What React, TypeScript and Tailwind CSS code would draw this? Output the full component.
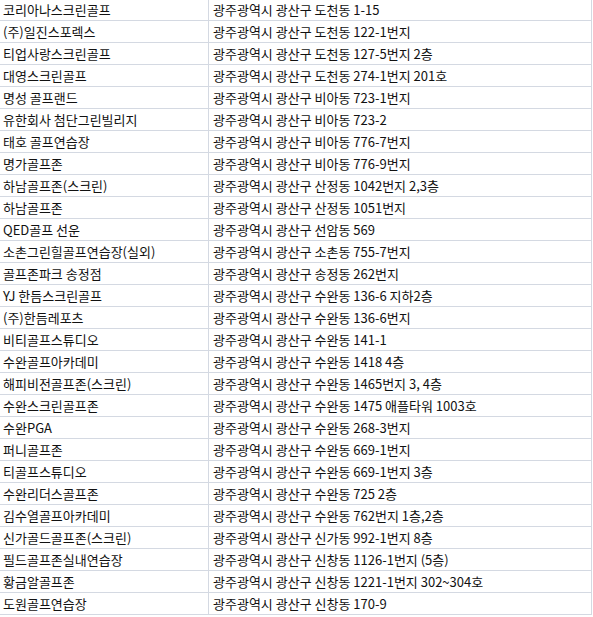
const rows: [string, string][] = [
  ["코리아나스크린골프", "광주광역시 광산구 도천동 1-15"],
  ["(주)일진스포렉스", "광주광역시 광산구 도천동 122-1번지"],
  ["티업사랑스크린골프", "광주광역시 광산구 도천동 127-5번지 2층"],
  ["대영스크린골프", "광주광역시 광산구 도천동 274-1번지 201호"],
  ["명성 골프랜드", "광주광역시 광산구 비아동 723-1번지"],
  ["유한회사 첨단그린빌리지", "광주광역시 광산구 비아동 723-2"],
  ["태호 골프연습장", "광주광역시 광산구 비아동 776-7번지"],
  ["명가골프존", "광주광역시 광산구 비아동 776-9번지"],
  ["하남골프존(스크린)", "광주광역시 광산구 산정동 1042번지 2,3층"],
  ["하남골프존", "광주광역시 광산구 산정동 1051번지"],
  ["QED골프 선운", "광주광역시 광산구 선암동 569"],
  ["소촌그린힐골프연습장(실외)", "광주광역시 광산구 소촌동 755-7번지"],
  ["골프존파크 송정점", "광주광역시 광산구 송정동 262번지"],
  ["YJ 한듬스크린골프", "광주광역시 광산구 수완동 136-6 지하2층"],
  ["(주)한듬레포츠", "광주광역시 광산구 수완동 136-6번지"],
  ["비티골프스튜디오", "광주광역시 광산구 수완동 141-1"],
  ["수완골프아카데미", "광주광역시 광산구 수완동 1418 4층"],
  ["해피비전골프존(스크린)", "광주광역시 광산구 수완동 1465번지 3, 4층"],
  ["수완스크린골프존", "광주광역시 광산구 수완동 1475 애플타워 1003호"],
  ["수완PGA", "광주광역시 광산구 수완동 268-3번지"],
  ["퍼니골프존", "광주광역시 광산구 수완동 669-1번지"],
  ["티골프스튜디오", "광주광역시 광산구 수완동 669-1번지 3층"],
  ["수완리더스골프존", "광주광역시 광산구 수완동 725 2층"],
  ["김수열골프아카데미", "광주광역시 광산구 수완동 762번지 1층,2층"],
  ["신가골드골프존(스크린)", "광주광역시 광산구 신가동 992-1번지 8층"],
  ["필드골프존실내연습장", "광주광역시 광산구 신창동 1126-1번지 (5층)"],
  ["황금알골프존", "광주광역시 광산구 신창동 1221-1번지 302~304호"],
  ["도원골프연습장", "광주광역시 광산구 신창동 170-9"],
]

export default function App() {
  return (
    <div className="w-[593px] h-[617px] bg-white overflow-hidden font-['Noto_Sans_CJK_KR',sans-serif] text-[13px] text-[#111]">
      {/* sheet is scrolled 1px, so the first row is cut at the top */}
      <div className="-mt-px w-[592px] border-r border-[#d4d9e2]">
        {rows.map(([name, addr]) => (
          <div key={name} className="flex h-[22px] border-b border-[#d4d9e2]">
            <div className="w-[209px] shrink-0 border-r border-[#d4d9e2] pl-[3px] leading-[22px] whitespace-nowrap overflow-hidden">
              {name}
            </div>
            <div className="flex-1 pl-[4px] leading-[22px] whitespace-nowrap overflow-hidden">
              {addr}
            </div>
          </div>
        ))}
      </div>
    </div>
  )
}
